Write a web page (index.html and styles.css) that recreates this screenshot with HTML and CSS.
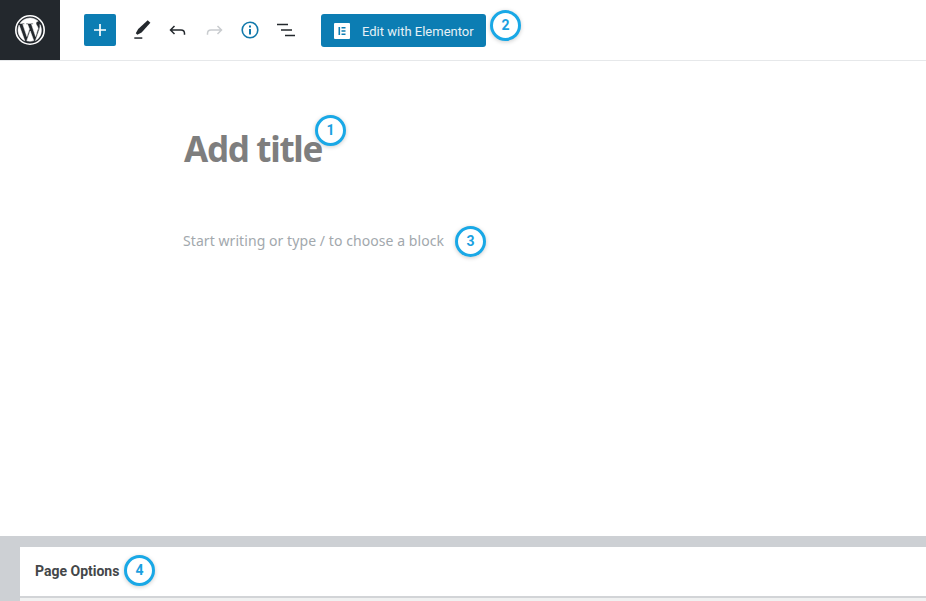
FILE: index.html
```html
<!DOCTYPE html>
<html lang="en">
<head>
<meta charset="utf-8">
<title>Add title</title>
<link rel="stylesheet" href="styles.css">
</head>
<body>
<div class="page">
  <header class="toolbar">
    <div class="logo">
      <svg width="32" height="32" viewBox="0 0 32 32"><circle cx="16" cy="16" r="14.200" fill="none" stroke="#fff" stroke-width="1.600"/><path fill="#fff" stroke="#fff" stroke-width=".5" d="M4 16c0 4.800 2.800 8.900 6.800 10.800L5.100 11.100C4.400 12.600 4 14.300 4 16zm20.200-.6c0-1.500-.5-2.500-1-3.300-.6-1-1.200-1.800-1.200-2.800 0-1.100.8-2.100 2-2.100h.2C22.100 5.300 19.200 4 16 4c-4.200 0-7.900 2.200-10 5.400h.8c1.300 0 3.200-.2 3.200-.2.600 0 .7.900.1 1 0 0-.6.100-1.300.1l4.100 12.300 2.500-7.500-1.800-4.800c-.6 0-1.200-.1-1.200-.1-.6 0-.5-1 .1-1 0 0 1.900.2 3 .2 1.300 0 3.200-.2 3.200-.2.600 0 .7.900.1 1 0 0-.6.100-1.300.1l4.100 12.200 1.100-3.800c.5-1.600.9-2.700.9-3.700zM16.200 17l-3.400 9.800c1 .3 2.100.5 3.200.5 1.300 0 2.600-.2 3.800-.7l-.1-.2zm9.700-6.400c.1.400.1.800.1 1.300 0 1.200-.2 2.600-.9 4.300l-3.600 10.400c3.500-2 5.900-5.800 5.900-10.200 0-2.100-.5-4-1.500-5.800z"/></svg>
    </div>
    <div class="tools">
      <button class="add" aria-label="Add block">
        <svg width="16" height="16" viewBox="0 0 16 16"><path d="M8 2v12M2 8h12" stroke="#fff" stroke-width="1.700" fill="none"/></svg>
      </button>
      <span class="tool">
        <svg width="20" height="20" viewBox="0 0 20 20"><path fill="#23282d" d="M15.700.2l2.700 2.600-8.800 9.700-4.300 2.200-1.500-1.500 2.400-4.300z"/><path fill="#23282d" d="M2.300 17.300h8v1.500h-8z"/></svg>
      </span>
      <span class="tool">
        <svg width="20" height="20" viewBox="0 0 20 20"><path d="M2.800 10h10.200c2.200 0 3.500 1.400 3.500 3.500v1.300M6.500 6l-4 4 4 4" fill="none" stroke="#23282d" stroke-width="1.500"/></svg>
      </span>
      <span class="tool">
        <svg width="20" height="20" viewBox="0 0 20 20"><path d="M17.200 10H7c-2.200 0-3.500 1.400-3.500 3.500v1.300M13.500 6l4 4-4 4" fill="none" stroke="#c9cccf" stroke-width="1.500"/></svg>
      </span>
      <span class="tool">
        <svg width="20" height="20" viewBox="0 0 20 20"><circle cx="10" cy="10" r="7.800" fill="none" stroke="#1279ab" stroke-width="1.600"/><path d="M9 9h2v5.500H9zM9 5.500h2v2H9z" fill="#1279ab"/></svg>
      </span>
      <span class="tool">
        <svg width="20" height="20" viewBox="0 0 20 20"><path fill="#23282d" d="M1 3.800h11v1.500H1zM5 9.200h11v1.500H5zM9 14.700h10v1.500H9z"/></svg>
      </span>
    </div>
    <button class="elementor">
      <svg class="e-icon" width="16" height="16" viewBox="0 0 16 16"><rect width="16" height="16" rx="1" fill="#fff"/><path fill="#0c7db3" d="M4.500 4h1.600v8H4.500zM7.500 4h4v1.500h-4zM7.500 7.200h4v1.500h-4zM7.500 10.500h4V12h-4z"/></svg>
      <span class="e-label">Edit with Elementor</span>
    </button>
  </header>

  <main class="canvas">
    <h1 class="title">Add title</h1>
    <p class="placeholder">Start writing or type / to choose a block</p>
  </main>

  <section class="meta">
    <div class="panel"><h2 class="panel-title">Page Options</h2></div>
    <div class="panel-rule"></div>
    <div class="panel-foot"></div>
  </section>

  <span class="badge b1">1</span>
  <span class="badge b2">2</span>
  <span class="badge b3">3</span>
  <span class="badge b4">4</span>
</div>
</body>
</html>
```
FILE: styles.css
```css
* { box-sizing: border-box; }
html, body { margin: 0; padding: 0; height: 100%; }
body { background: #fff; overflow: hidden; }
.page { position: relative; width: 926px; height: 601px; display: flex; flex-direction: column; overflow: hidden; }

.toolbar { height: 61px; flex: none; display: flex; align-items: flex-start; border-bottom: 1px solid #e6e8ea; background: #fff; }
.logo { width: 60px; height: 60px; background: #23282d; display: flex; align-items: center; justify-content: center; }
.tools { display: flex; align-items: center; height: 60px; margin-left: 24px; }
.add { width: 32px; height: 32px; border: 0; padding: 0; border-radius: 2px; background: #0c7db3; display: flex; align-items: center; justify-content: center; margin-right: 8px; }
.tool { width: 36px; height: 36px; display: flex; align-items: center; justify-content: center; }
.elementor { margin: 14px 0 0 17px; width: 165px; height: 33px; border: 0; border-radius: 3px; background: #0c7db3; color: #e6f1f6; font: 400 13px/33px Roboto, sans-serif; display: flex; align-items: center; padding: 0 0 0 13px; }
.e-icon { margin-right: 12px; flex: none; }
.e-label { position: relative; top: 1px; }

.canvas { flex: 1; padding: 64px 0 0 184px; }
.title { margin: 0; font: 700 35px/48px "Noto Sans", sans-serif; letter-spacing: -1.3px; color: #7e7e7e; }
.placeholder { margin: 56px 0 0 -1px; font: 400 14px/24px "Noto Sans", sans-serif; letter-spacing: .07px; color: #a2a8ad; }

.meta { height: 65px; flex: none; background: #cdd0d4; padding: 11px 0 0 20px; display: flex; flex-direction: column; }
.panel { height: 49px; flex: none; background: #fff; display: flex; align-items: center; padding: 0 0 1px 15px; }
.panel-title { margin: 0; font: 700 14px/20px Roboto, sans-serif; color: #444749; }
.panel-rule { height: 2px; flex: none; background: #d2d4d7; }
.panel-foot { flex: 1; background: #f0f1f1; }
.badge { position: absolute; width: 31px; height: 31px; border-radius: 50%; border: 3px solid #19a8e6; background: #fff; color: #1a9fe0; font: 700 14px/25px Roboto, sans-serif; text-align: center; box-shadow: 0 1px 4px rgba(0,0,0,.2); }
.b1 { left: 315px; top: 115px; }
.b2 { left: 490px; top: 10px; }
.b3 { left: 455px; top: 226px; }
.b4 { left: 124px; top: 555px; }
```
